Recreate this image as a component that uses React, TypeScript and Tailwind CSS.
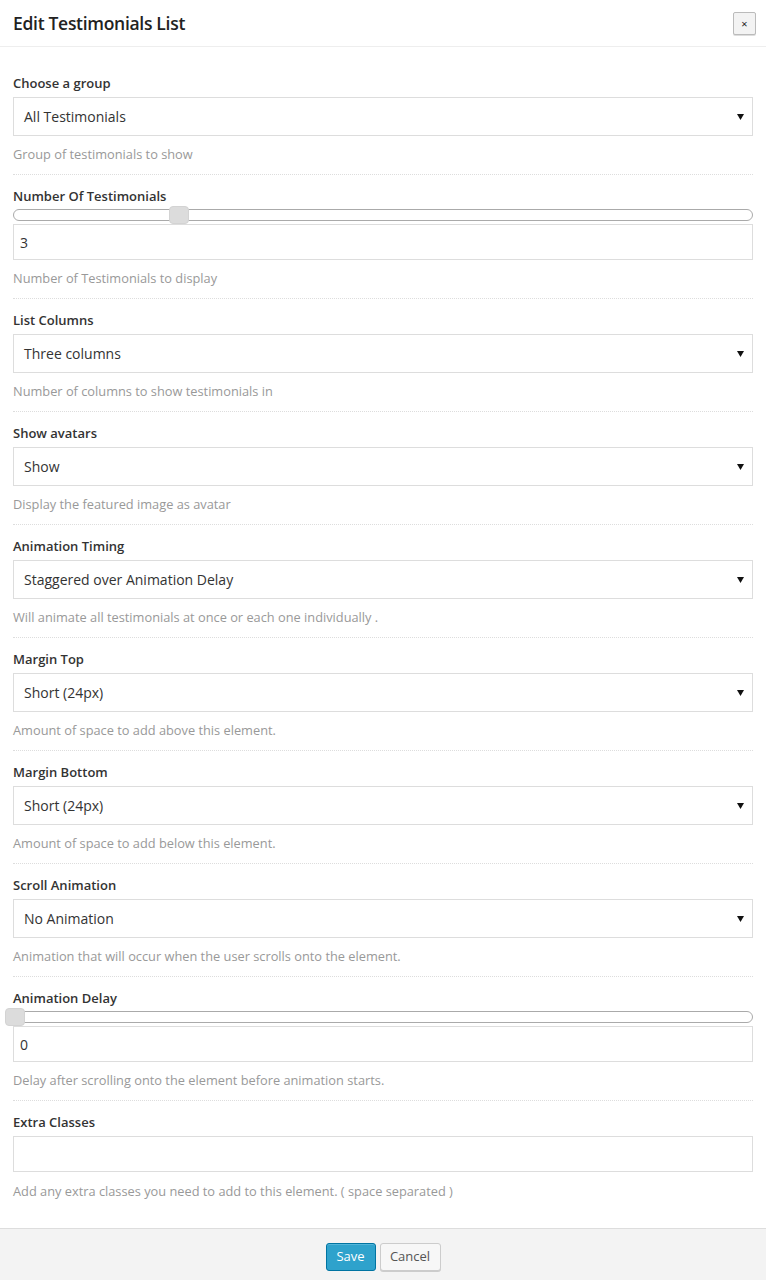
import React from "react";

type Field =
  | { kind: "select"; label: string; value: string; help: string }
  | { kind: "slider"; label: string; value: string; pos: number; help: string }
  | { kind: "text"; label: string; help: string };

const fields: Field[] = [
  { kind: "select", label: "Choose a group", value: "All Testimonials", help: "Group of testimonials to show" },
  { kind: "slider", label: "Number Of Testimonials", value: "3", pos: 156, help: "Number of Testimonials to display" },
  { kind: "select", label: "List Columns", value: "Three columns", help: "Number of columns to show testimonials in" },
  { kind: "select", label: "Show avatars", value: "Show", help: "Display the featured image as avatar" },
  {
    kind: "select",
    label: "Animation Timing",
    value: "Staggered over Animation Delay",
    help: "Will animate all testimonials at once or each one individually .",
  },
  { kind: "select", label: "Margin Top", value: "Short (24px)", help: "Amount of space to add above this element." },
  { kind: "select", label: "Margin Bottom", value: "Short (24px)", help: "Amount of space to add below this element." },
  {
    kind: "select",
    label: "Scroll Animation",
    value: "No Animation",
    help: "Animation that will occur when the user scrolls onto the element.",
  },
  {
    kind: "slider",
    label: "Animation Delay",
    value: "0",
    pos: -8,
    help: "Delay after scrolling onto the element before animation starts.",
  },
  { kind: "text", label: "Extra Classes", help: "Add any extra classes you need to add to this element. ( space separated )" },
];

function Caret() {
  return (
    <svg width="7" height="6" viewBox="0 0 7 6" className="shrink-0">
      <path d="M0 0 H7 L3.5 6 Z" fill="#111" />
    </svg>
  );
}

function Slider({ pos }: { pos: number }) {
  return (
    <div className="relative h-[18px] pt-[3px]">
      <div className="h-[12px] rounded-[6px] border border-[#aaa] bg-white" />
      <div
        className="absolute top-0 h-[18px] w-[20px] rounded-[4px] border border-[#d3d3d3] bg-[#dcdcdc]"
        style={{ left: pos }}
      />
    </div>
  );
}

function FieldRow({ field, last }: { field: Field; last: boolean }) {
  return (
    <div className={last ? "pt-[11px] pb-[27px]" : "pt-[11px] pb-[10px] border-b border-dotted border-[#ddd]"}>
      <div className="h-[20px] text-[13px] leading-[20px] font-semibold text-[#333]">{field.label}</div>
      {field.kind === "select" && (
        <div className="mt-[4px] flex h-[39px] items-center justify-between border border-[#ddd] bg-white pl-[10px] pr-[8px] text-[14px] text-[#333]">
          <span>{field.value}</span>
          <Caret />
        </div>
      )}
      {field.kind === "slider" && (
        <>
          <Slider pos={field.pos} />
          <div className="flex h-[36px] items-center border border-[#ddd] bg-white px-[6px] text-[14px] text-[#333]">
            {field.value}
          </div>
        </>
      )}
      {field.kind === "text" && <div className="mt-[4px] h-[36px] border border-[#ddd] bg-white" />}
      <div
        className={`${field.kind === "text" ? "mt-[9px]" : "mt-[8px]"} h-[20px] text-[12.8px] leading-[20px] text-[#999]`}
      >
        {field.help}
      </div>
    </div>
  );
}

export default function App() {
  return (
    <div className="w-full min-h-screen bg-white font-['Open_Sans',sans-serif] text-[#333]">
      {/* Header */}
      <div className="flex h-[47px] items-center justify-between border-b border-[#eee] pl-[13px] pr-[10px]">
        <h1 className="text-[17.5px] font-semibold tracking-[-0.3px] text-[#222]">Edit Testimonials List</h1>
        <button className="flex h-[23px] w-[23px] items-center justify-center rounded-[2px] border border-[#bbb] bg-[#f3f3f3] text-[11px] leading-none text-[#222] shadow-[0_1px_0_#ddd]">
          ×
        </button>
      </div>

      {/* Fields */}
      <div className="px-[13px] pt-[15px]">
        {fields.map((f, i) => (
          <FieldRow key={f.label} field={f} last={i === fields.length - 1} />
        ))}
      </div>

      {/* Footer */}
      <div className="flex h-[52px] items-start justify-center gap-[4px] border-t border-[#ddd] bg-[#f3f3f3] pt-[14px]">
        <button className="h-[28px] w-[50px] rounded-[3px] border border-[#0074a2] bg-[#2ea2cc] text-[13px] text-white shadow-[inset_0_1px_0_rgba(120,200,230,0.5)]">
          Save
        </button>
        <button className="h-[28px] w-[61px] rounded-[3px] border border-[#ccc] bg-[#f7f7f7] text-[13px] text-[#555] shadow-[0_1px_0_#ccc]">
          Cancel
        </button>
      </div>
    </div>
  );
}
